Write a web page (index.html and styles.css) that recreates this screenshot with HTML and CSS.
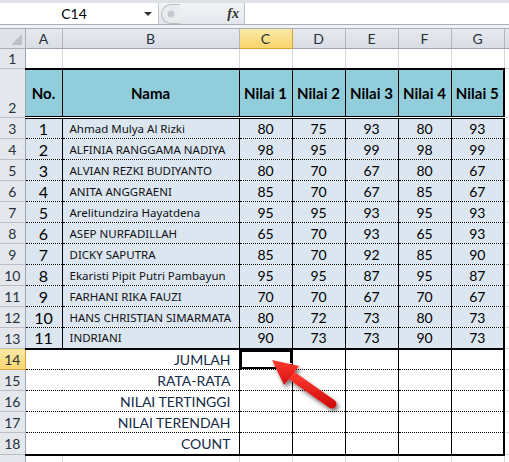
FILE: index.html
```html
<!DOCTYPE html>
<html lang="id">
<head>
    <meta charset="UTF-8">
    <title>Nilai Siswa</title>
    <link rel="stylesheet" href="styles.css">
</head>
<body>
    <div class="formula-bar">
        <div class="name-box">
            <span class="name-value">C14</span>
            <span class="name-arrow"></span>
        </div>
        <div class="bar-grip">
            <span class="grip-dot"></span>
            <span class="fx">fx</span>
        </div>
        <div class="formula-input"></div>
    </div>
    <div class="bar-gap"></div>

    <table class="sheet">
        <colgroup>
            <col class="c-rh"><col class="c-a"><col class="c-b">
            <col class="c-v"><col class="c-v"><col class="c-v"><col class="c-v"><col class="c-v">
            <col class="c-h">
        </colgroup>
        <tr class="r-head">
            <th class="corner"><span class="corner-tri"></span></th>
            <th class="col-head">A</th>
            <th class="col-head">B</th>
            <th class="col-head active">C</th>
            <th class="col-head">D</th>
            <th class="col-head">E</th>
            <th class="col-head">F</th>
            <th class="col-head">G</th>
            <th class="col-head last"></th>
        </tr>
        <tr class="r-1">
            <th class="row-head">1</th>
            <td class="gc"></td><td class="gc"></td><td class="gc"></td><td class="gc"></td>
            <td class="gc"></td><td class="gc"></td><td class="gc"></td><td class="gc"></td>
        </tr>
        <tr class="r-2">
            <th class="row-head bottom">2</th>
            <td class="hd">No.</td>
            <td class="hd">Nama</td>
            <td class="hd">Nilai 1</td>
            <td class="hd">Nilai 2</td>
            <td class="hd">Nilai 3</td>
            <td class="hd">Nilai 4</td>
            <td class="hd edge">Nilai 5</td>
            <td class="gc"></td>
        </tr>
        <tbody id="rows"></tbody>
        <tr class="r-d">
            <th class="row-head active">14</th>
            <td class="lbl" colspan="2">JUMLAH</td>
            <td class="sum selected"><span class="fill-handle"></span></td>
            <td class="sum"></td><td class="sum"></td><td class="sum"></td><td class="sum edge"></td>
            <td class="gc"></td>
        </tr>
        <tr class="r-d">
            <th class="row-head">15</th>
            <td class="lbl" colspan="2">RATA-RATA</td>
            <td class="sum"></td><td class="sum"></td><td class="sum"></td><td class="sum"></td><td class="sum edge"></td>
            <td class="gc"></td>
        </tr>
        <tr class="r-d">
            <th class="row-head">16</th>
            <td class="lbl" colspan="2">NILAI TERTINGGI</td>
            <td class="sum"></td><td class="sum"></td><td class="sum"></td><td class="sum"></td><td class="sum edge"></td>
            <td class="gc"></td>
        </tr>
        <tr class="r-d">
            <th class="row-head">17</th>
            <td class="lbl" colspan="2">NILAI TERENDAH</td>
            <td class="sum"></td><td class="sum"></td><td class="sum"></td><td class="sum"></td><td class="sum edge"></td>
            <td class="gc"></td>
        </tr>
        <tr class="r-d r-end">
            <th class="row-head">18</th>
            <td class="lbl" colspan="2">COUNT</td>
            <td class="sum"></td><td class="sum"></td><td class="sum"></td><td class="sum"></td><td class="sum edge"></td>
            <td class="gc"></td>
        </tr>
        <tr class="r-19">
            <th class="row-head"></th>
            <td class="gc"></td><td class="gc"></td><td class="gc"></td><td class="gc"></td>
            <td class="gc"></td><td class="gc"></td><td class="gc"></td><td class="gc"></td>
        </tr>
    </table>

    <svg class="arrow" width="509" height="462" viewBox="0 0 509 462">
        <defs>
            <filter id="shadow" x="-20%" y="-20%" width="140%" height="140%">
                <feDropShadow dx="2" dy="3" stdDeviation="2" flood-color="#000" flood-opacity="0.55"/>
            </filter>
            <linearGradient id="red" x1="0" y1="0" x2="0" y2="1">
                <stop offset="0" stop-color="#ff3b30"/>
                <stop offset="1" stop-color="#d40f0f"/>
            </linearGradient>
        </defs>
        <g filter="url(#shadow)">
            <line x1="288" y1="373" x2="332" y2="404" stroke="url(#red)" stroke-width="9" stroke-linecap="round"/>
            <polygon points="272,360 299,366 284,385" fill="url(#red)"/>
        </g>
    </svg>

    <script>
        var data = [
            [1, 'Ahmad Mulya Al Rizki', 80, 75, 93, 80, 93],
            [2, 'ALFINIA RANGGAMA NADIYA', 98, 95, 99, 98, 99],
            [3, 'ALVIAN REZKI BUDIYANTO', 80, 70, 67, 80, 67],
            [4, 'ANITA ANGGRAENI', 85, 70, 67, 85, 67],
            [5, 'Arelitundzira Hayatdena', 95, 95, 93, 95, 93],
            [6, 'ASEP NURFADILLAH', 65, 70, 93, 65, 93],
            [7, 'DICKY SAPUTRA', 85, 70, 92, 85, 90],
            [8, 'Ekaristi Pipit Putri Pambayun', 95, 95, 87, 95, 87],
            [9, 'FARHANI RIKA FAUZI', 70, 70, 67, 70, 67],
            [10, 'HANS CHRISTIAN SIMARMATA', 80, 72, 73, 80, 73],
            [11, 'INDRIANI', 90, 73, 73, 90, 73]
        ];

        var html = '';
        data.forEach(function(r, i) {
            var cls = i === data.length - 1 ? 'r-d r-last' : 'r-d';
            html += '<tr class="' + cls + '">';
            html += '<th class="row-head">' + (i + 3) + '</th>';
            html += '<td class="no">' + r[0] + '</td>';
            html += '<td class="nm">' + r[1] + '</td>';
            for (var k = 2; k < 7; k++) {
                html += '<td class="val' + (k === 6 ? ' edge' : '') + '">' + r[k] + '</td>';
            }
            html += '<td class="gc"></td></tr>';
        });
        document.getElementById('rows').innerHTML = html;
    </script>
</body>
</html>
```

FILE: styles.css
```css
body {
    margin: 0;
    width: 509px;
    height: 462px;
    overflow: hidden;
    position: relative;
    background: #fff;
    font-family: Lato, "Liberation Sans", sans-serif;
    color: #000;
}

/* formula bar */
.formula-bar {
    display: flex;
    height: 21px;
    border-top: 3px solid #dde1e6;
    border-bottom: 1px solid #a9b0b9;
    background: #fff;
}
.name-box {
    width: 158px;
    display: flex;
    align-items: center;
    border-right: 1px solid #c3c8ce;
}
.name-value {
    flex: 1;
    text-align: center;
    font-size: 14px;
    padding-left: 4px;
}
.name-arrow {
    width: 0;
    height: 0;
    border-left: 4px solid transparent;
    border-right: 4px solid transparent;
    border-top: 4px solid #333;
    margin-right: 6px;
}
.bar-grip {
    width: 85px;
    display: flex;
    align-items: center;
    background: linear-gradient(#f2f4f6, #e3e7ec);
    border-right: 1px solid #b9c0c8;
}
.grip-dot {
    width: 18px;
    height: 18px;
    margin-left: 2px;
    border-radius: 10px 0 0 10px;
    border: 1px solid #b7bec6;
    border-right: none;
    background: radial-gradient(circle at 9px 9px, #c6cbd1 3px, #e9ecef 4px);
}
.fx {
    margin-left: auto;
    margin-right: 5px;
    font-family: "Liberation Serif", serif;
    font-style: italic;
    font-weight: bold;
    font-size: 14px;
    color: #333;
}
.formula-input {
    flex: 1;
    background: #fff;
}
.bar-gap {
    height: 3px;
    background: #f0f2f5;
    border-bottom: 1px solid #a9b0b9;
}

/* sheet grid */
.sheet {
    border-collapse: collapse;
    table-layout: fixed;
    width: 509px;
}
.c-rh { width: 25px; }
.c-a { width: 37px; }
.c-b { width: 177px; }
.c-v { width: 53px; }
.c-h { width: 5px; }

.sheet th,
.sheet td {
    padding: 0;
    overflow: hidden;
    white-space: nowrap;
}

.r-head th { height: 19px; }
.r-1 th { height: 19px; }
.r-2 th { height: 47px; }
.r-d th { height: 20px; }
.r-end th { height: 21px; }
.r-19 th { height: 8px; }

.corner {
    background: #dfe3e8;
    border-right: 1px solid #a9b0b9;
    border-bottom: 1px solid #a9b0b9;
    position: relative;
}
.corner-tri {
    position: absolute;
    right: 3px;
    bottom: 3px;
    width: 0;
    height: 0;
    border-left: 11px solid transparent;
    border-bottom: 11px solid #b9c0c8;
}
.col-head {
    background: linear-gradient(#e6e9ee, #d9dee4);
    border-right: 1px solid #b0b7c0;
    border-bottom: 1px solid #9aa3ae;
    font-weight: normal;
    font-size: 14px;
    color: #27313d;
}
.col-head.active {
    background: linear-gradient(#fbe9a6, #f8d56c);
    border-right: 1px solid #e2a23a;
    border-bottom: 1px solid #e2a23a;
    border-left: 1px solid #e2a23a;
}
.row-head {
    background: #e4e8ed;
    border-right: 1px solid #9aa3ae;
    border-bottom: 1px solid #b7bec7;
    font-weight: normal;
    font-size: 14px;
    color: #27313d;
    text-align: center;
}
.sheet .row-head.bottom {
    vertical-align: bottom;
    padding-bottom: 1px;
}
.row-head.active {
    background: linear-gradient(#fbe9a6, #f8d56c);
    border-bottom: 1px solid #e2a23a;
    border-right: 1px solid #e2a23a;
}

.gc {
    border-right: 1px solid #d6d6d6;
    border-bottom: 1px solid #d6d6d6;
}

/* table header */
.hd {
    background: #92cddc;
    font-weight: bold;
    font-size: 15px;
    text-align: center;
    border-top: 2px solid #000;
    border-left: 1px solid #000;
    border-right: 1px solid #000;
    border-bottom: 3px double #000;
}
.hd.edge,
.val.edge,
.sum.edge {
    border-right: 2px solid #000;
}

/* data rows */
.no,
.nm,
.val {
    background: #dce6f1;
    border-left: 1px solid #000;
    border-right: 1px solid #000;
    border-bottom: 1px dotted #000;
}
.no {
    text-align: center;
    font-size: 16px;
}
.sheet .nm {
    font-family: "Noto Sans", "DejaVu Sans", sans-serif;
    font-size: 11.5px;
    padding-left: 7px;
    color: #111;
}
.val {
    text-align: center;
    font-size: 14px;
}
.r-last td.no,
.r-last td.nm,
.r-last td.val {
    border-bottom: 2px solid #000;
}

/* summary rows */
.sheet .lbl {
    text-align: right;
    padding-right: 8px;
    font-size: 14px;
    color: #142a47;
    border-right: 1px solid #000;
    border-bottom: 1px dotted #000;
}
.sum {
    border-right: 1px solid #000;
    border-bottom: 1px dotted #000;
}
.r-end .lbl,
.r-end .sum {
    border-bottom: 2px solid #000;
}
.selected {
    position: relative;
    box-shadow: inset 0 0 0 2px #000;
}
.fill-handle {
    position: absolute;
    right: -1px;
    bottom: -1px;
    width: 5px;
    height: 5px;
    background: #000;
    border: 1px solid #fff;
}

.arrow {
    position: absolute;
    left: 0;
    top: 0;
    pointer-events: none;
}
```
